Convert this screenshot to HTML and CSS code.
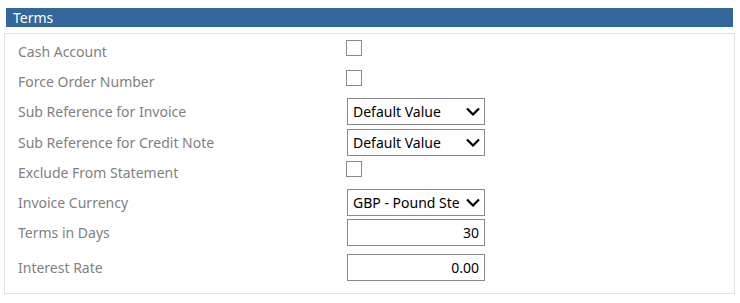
FILE: index.html
```html
<!DOCTYPE html>
<html lang="en">

<head>
	<meta charset="UTF-8">
	<meta name="viewport" content="width=device-width, initial-scale=1.0">
	<title>Terms</title>
	<link rel="stylesheet" href="styles.css">
</head>

<body>

	<div class="section-title">Terms</div>
	<form class="terms" name="terms">
		<div class="form-row">
			<label for="cashAccount">Cash Account</label>
			<input type="checkbox" name="cashAccount" id="cashAccount">
		</div>
		<div class="form-row">
			<label for="forceOrder">Force Order Number</label>
			<input type="checkbox" name="forceOrder" id="forceOrder">
		</div>
		<div class="form-row">
			<label for="subRefInvoice">Sub Reference for Invoice</label>
			<select name="subRefInvoice" id="subRefInvoice">
				<option>Default Value</option>
			</select>
		</div>
		<div class="form-row">
			<label for="subRefCredit">Sub Reference for Credit Note</label>
			<select name="subRefCredit" id="subRefCredit">
				<option>Default Value</option>
			</select>
		</div>
		<div class="form-row">
			<label for="excludeStatement">Exclude From Statement</label>
			<input type="checkbox" name="excludeStatement" id="excludeStatement">
		</div>
		<div class="form-row">
			<label for="currency">Invoice Currency</label>
			<select name="currency" id="currency">
				<option>GBP - Pound Sterling</option>
			</select>
		</div>
		<div class="form-row">
			<label for="termsDays">Terms in Days</label>
			<input type="text" name="termsDays" id="termsDays" value="30">
		</div>
		<div class="form-row last">
			<label for="interestRate">Interest Rate</label>
			<input type="text" name="interestRate" id="interestRate" value="0.00">
		</div>
	</form>

</body>

</html>
```

FILE: styles.css
```css
body {
	font-family: 'Noto Sans', 'Open Sans', sans-serif;
	font-size: 14px;
	background-color: white;
	margin: 0;
	padding: 8px 4px 0 4px;
}

.section-title {
	background-color: #336699;
	color: white;
	height: 19px;
	line-height: 19px;
	margin: 0 3px 6px 2px;
	padding-left: 7px;
}

.terms {
	border: 1px solid #e2e2e2;
	width: 731px;
	height: 261px;
	box-sizing: border-box;
	padding: 2px 0 0 13px;
	display: flex;
	flex-direction: column;
}

.form-row {
	display: flex;
	align-items: center;
	height: 30.3px;
}

.form-row.last {
	height: 33px;
	padding-top: 3px;
}

label {
	width: 329px;
	color: #7f7f7f;
}

input[type="checkbox"] {
	appearance: none;
	width: 16px;
	height: 16px;
	margin: -6px 0 0 -1px;
	border: 1px solid #8a8a8a;
	background-color: white;
}

select,
input[type="text"] {
	width: 138px;
	height: 27px;
	box-sizing: border-box;
	border: 1px solid #8a8a8a;
	background-color: white;
	font-family: inherit;
	font-size: 14px;
	color: black;
	margin: 0;
}

select {
	appearance: none;
	padding: 0 24px 0 5px;
	background-image: url("data:image/svg+xml,%3Csvg xmlns='http://www.w3.org/2000/svg' width='14' height='9'%3E%3Cpath d='M1 1.5l6 6 6-6' fill='none' stroke='black' stroke-width='2.2'/%3E%3C/svg%3E");
	background-repeat: no-repeat;
	background-position: right 4px center;
}

input[type="text"] {
	text-align: right;
	padding: 0 5px;
}
```
